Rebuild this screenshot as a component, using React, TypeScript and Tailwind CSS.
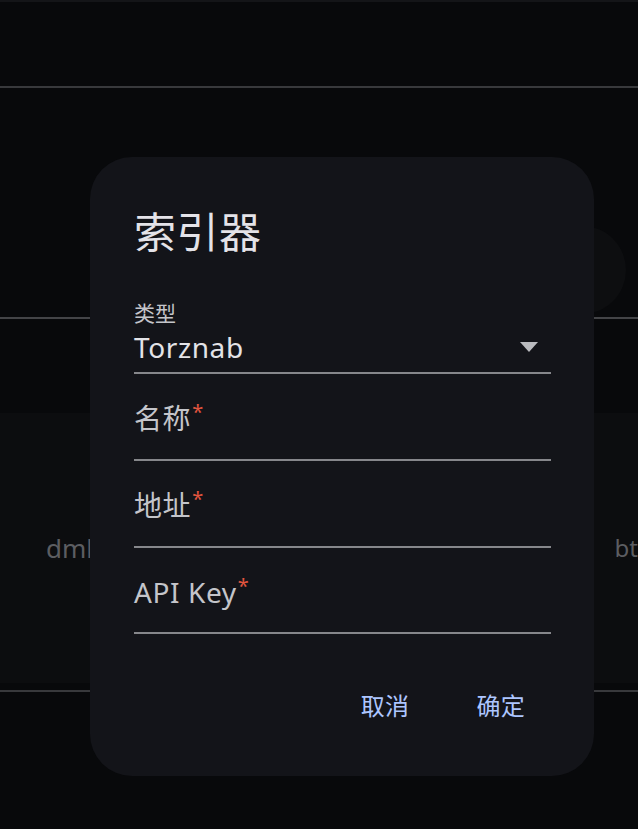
import React from "react";

const font = { fontFamily: '"Noto Sans", "Noto Sans CJK SC", sans-serif' };

function Field({ label, h }: { label: string; h: string }) {
  return (
    <div className={`${h} border-b-2 border-[#86878b] pt-[26px]`}>
      <div className="text-[28px] leading-[36px] tracking-[0.6px] text-[#c4c5ca]">
        {label}
        <span className="ml-[1px] inline-block align-top text-[20px] leading-[24px] text-[#e2553f]">*</span>
      </div>
    </div>
  );
}

export default function App() {
  return (
    <div className="relative h-[829px] w-[638px] overflow-hidden bg-[#08090b]" style={font}>
      {/* background page, dimmed by the scrim */}
      <div className="h-[2px] bg-[#141518]" />
      <div className="h-[84px]" />
      <div className="h-[2px] bg-[#38393c]" />
      <div className="flex h-[229px] items-end justify-end pb-[3px] pr-[12px]">
        <div className="h-[88px] w-[88px] rounded-full bg-[#0d0e10]" />
      </div>
      <div className="h-[2px] bg-[#434447]" />
      <div className="h-[94px]" />
      <div className="flex h-[270px] items-center justify-between bg-[#0c0d0f] pl-[46px]">
        <span className="text-[26px] text-[#5c5d61]">dmhy</span>
        <span className="text-[24px] text-[#5c5d61]">bt</span>
      </div>
      <div className="h-[7px]" />
      <div className="h-[2px] bg-[#38393c]" />

      {/* dialog */}
      <div className="absolute left-[90px] top-[157px] h-[619px] w-[504px] rounded-[42px] bg-[#131419] pl-[44px] pr-[43px] pt-[46px]">
        <div className="flex h-[56px] items-center text-[42px] tracking-[0.5px] text-[#e4e3e8]">索引器</div>

        <div className="mt-[35px] h-[80px] border-b-2 border-[#86878b] pt-[7px]">
          <div className="text-[21px] leading-[24px] text-[#c4c5ca]">类型</div>
          <div className="mt-[4px] flex items-center justify-between pr-[13px]">
            <span className="text-[28px] leading-[36px] tracking-[0.6px] text-[#e3e3e7]">Torznab</span>
            <svg width="18" height="10" viewBox="0 0 18 10">
              <path d="M0 0 H18 L9 10 Z" fill="#babbbf" />
            </svg>
          </div>
        </div>

        <Field label="名称" h="h-[87px]" />
        <Field label="地址" h="h-[87px]" />
        <Field label="API Key" h="h-[86px]" />

        <div className="mt-[48px] flex justify-end gap-[19px] pr-[2px]">
          <button className="h-[48px] px-[24px] text-[24px] tracking-[0.3px] text-[#adc6ff]">取消</button>
          <button className="h-[48px] px-[24px] text-[24px] tracking-[0.3px] text-[#adc6ff]">确定</button>
        </div>
      </div>
    </div>
  );
}
